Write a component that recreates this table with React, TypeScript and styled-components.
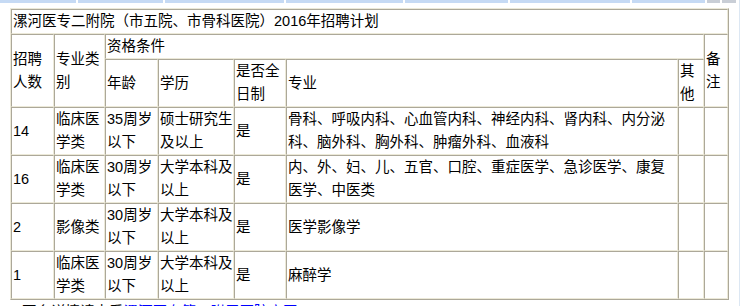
import styled, { createGlobalStyle } from 'styled-components'

const GlobalStyle = createGlobalStyle`
  html, body {
    margin: 0;
    padding: 0;
    background: #ffffff;
  }
  body {
    font-family: "Liberation Sans", "Noto Sans CJK SC", sans-serif;
    font-size: 14.5px;
    color: #000000;
  }
`

const Page = styled.div`
  width: 740px;
  height: 306px;
  overflow: hidden;
  border-right: 1px solid #dce7f3;
  box-sizing: border-box;
`

const TabStrip = styled.div`
  display: flex;
  height: 3px;
  gap: 2px;
`

const Tab = styled.div<{ w: number; grey?: boolean }>`
  width: ${({ w }) => w}px;
  height: 3px;
  background: ${({ grey }) => (grey ? '#c9ced6' : '#c6daf4')};
`

const Body = styled.div`
  padding: 5px 0 0 10px;
`

const Table = styled.table`
  width: 719px;
  table-layout: fixed;
  border-collapse: separate;
  border-spacing: 0;
  border-top: 1px solid #ece9d8;
  border-left: 1px solid #ece9d8;
  border-right: 1px solid #aca899;
  border-bottom: 1px solid #aca899;
`

const Cell = styled.td<{ h?: number }>`
  padding: 0 0 0 1px;
  line-height: 23px;
  height: ${({ h }) => (h ? `${h}px` : 'auto')};
  vertical-align: middle;
  text-align: left;
  border-top: 1px solid #aca899;
  border-left: 1px solid #aca899;
  border-right: 1px solid #ece9d8;
  border-bottom: 1px solid #ece9d8;
  word-break: break-all;
  overflow: hidden;
`

const Note = styled.div`
  padding: 2px 0 0 12px;
  line-height: 20px;
  white-space: nowrap;
`

const Link = styled.a`
  color: #0000ff;
  text-decoration: underline;
`

const rows = [
  {
    n: '14',
    type: '临床医学类',
    age: '35周岁以下',
    edu: '硕士研究生及以上',
    major: '骨科、呼吸内科、心血管内科、神经内科、肾内科、内分泌科、脑外科、胸外科、肿瘤外科、血液科',
  },
  {
    n: '16',
    type: '临床医学类',
    age: '30周岁以下',
    edu: '大学本科及以上',
    major: '内、外、妇、儿、五官、口腔、重症医学、急诊医学、康复医学、中医类',
  },
  { n: '2', type: '影像类', age: '30周岁以下', edu: '大学本科及以上', major: '医学影像学' },
  { n: '1', type: '临床医学类', age: '30周岁以下', edu: '大学本科及以上', major: '麻醉学' },
]

const tabs = [76, 85, 119, 117, 103, 120, 73]

export default function App() {
  return (
    <Page>
      <GlobalStyle />
      <TabStrip>
        {tabs.map((w, i) => (
          <Tab key={i} w={w} />
        ))}
        <Tab w={13} grey />
        <Tab w={14} grey />
      </TabStrip>
      <Body>
        <Table>
          <colgroup>
            <col style={{ width: 43 }} />
            <col style={{ width: 51 }} />
            <col style={{ width: 53 }} />
            <col style={{ width: 76 }} />
            <col style={{ width: 52 }} />
            <col style={{ width: 392 }} />
            <col style={{ width: 26 }} />
            <col style={{ width: 24 }} />
          </colgroup>
          <tbody>
            <tr>
              <Cell colSpan={8} h={22}>
                漯河医专二附院（市五院、市骨科医院）2016年招聘计划
              </Cell>
            </tr>
            <tr>
              <Cell rowSpan={2}>招聘人数</Cell>
              <Cell rowSpan={2}>专业类别</Cell>
              <Cell colSpan={5} h={23}>
                资格条件
              </Cell>
              <Cell rowSpan={2}>备注</Cell>
            </tr>
            <tr>
              <Cell h={46}>年龄</Cell>
              <Cell>学历</Cell>
              <Cell>是否全日制</Cell>
              <Cell>专业</Cell>
              <Cell>其他</Cell>
            </tr>
            {rows.map((r) => (
              <tr key={r.n}>
                <Cell h={46}>{r.n}</Cell>
                <Cell>{r.type}</Cell>
                <Cell>{r.age}</Cell>
                <Cell>{r.edu}</Cell>
                <Cell>是</Cell>
                <Cell>{r.major}</Cell>
                <Cell></Cell>
                <Cell></Cell>
              </tr>
            ))}
          </tbody>
        </Table>
        <Note>
          更多详情请查看<Link href="#">漯河医专第二附属医院官网</Link>
        </Note>
      </Body>
    </Page>
  )
}
